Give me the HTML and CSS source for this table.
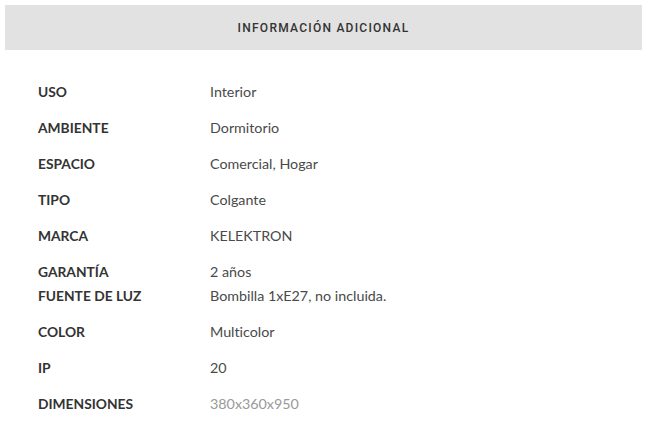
FILE: index.html
```html
<!DOCTYPE html>
<html lang="es">
<head>
<meta charset="utf-8">
<title>Información adicional</title>
<link rel="stylesheet" href="styles.css">
</head>
<body>
<div class="panel">
  <div class="panel-head">INFORMACIÓN ADICIONAL</div>
  <table class="attrs">
    <tr><th>USO</th><td>Interior</td></tr>
    <tr><th>AMBIENTE</th><td>Dormitorio</td></tr>
    <tr><th>ESPACIO</th><td>Comercial, Hogar</td></tr>
    <tr><th>TIPO</th><td>Colgante</td></tr>
    <tr><th>MARCA</th><td>KELEKTRON</td></tr>
    <tr class="tight-bottom"><th>GARANTÍA</th><td>2 años</td></tr>
    <tr class="tight-top"><th>FUENTE DE LUZ</th><td>Bombilla 1xE27, no incluida.</td></tr>
    <tr><th>COLOR</th><td>Multicolor</td></tr>
    <tr><th>IP</th><td>20</td></tr>
    <tr><th>DIMENSIONES</th><td class="muted">380x360x950</td></tr>
  </table>
</div>
</body>
</html>
```
FILE: styles.css
```css
html, body {
  margin: 0;
  padding: 0;
  background: #ffffff;
}
.panel {
  padding: 5px 6px 0 5px;
}
.panel-head {
  height: 45px;
  background: #e2e2e2;
  display: flex;
  align-items: center;
  justify-content: center;
  font-family: Roboto, "Liberation Sans", sans-serif;
  font-size: 12px;
  font-weight: 500;
  letter-spacing: 1.25px;
  color: #333;
}
.attrs {
  border-collapse: collapse;
  margin-top: 24px;
  margin-left: 33px;
}
.attrs th, .attrs td {
  padding: 6px 0;
  line-height: 24px;
  text-align: left;
  vertical-align: middle;
}
.attrs th {
  width: 172px;
  font-family: Lato, "Open Sans", sans-serif;
  font-weight: 700;
  font-size: 13.8px;
  color: #333;
}
.attrs td {
  font-family: Lato, "Open Sans", sans-serif;
  font-weight: 400;
  font-size: 14.3px;
  color: #4a4a4a;
  font-variant-ligatures: none;
}
.attrs .tight-bottom th, .attrs .tight-bottom td {
  padding-bottom: 0;
}
.attrs .tight-top th, .attrs .tight-top td {
  padding-top: 0;
}
.attrs td.muted {
  color: #999;
}
```
